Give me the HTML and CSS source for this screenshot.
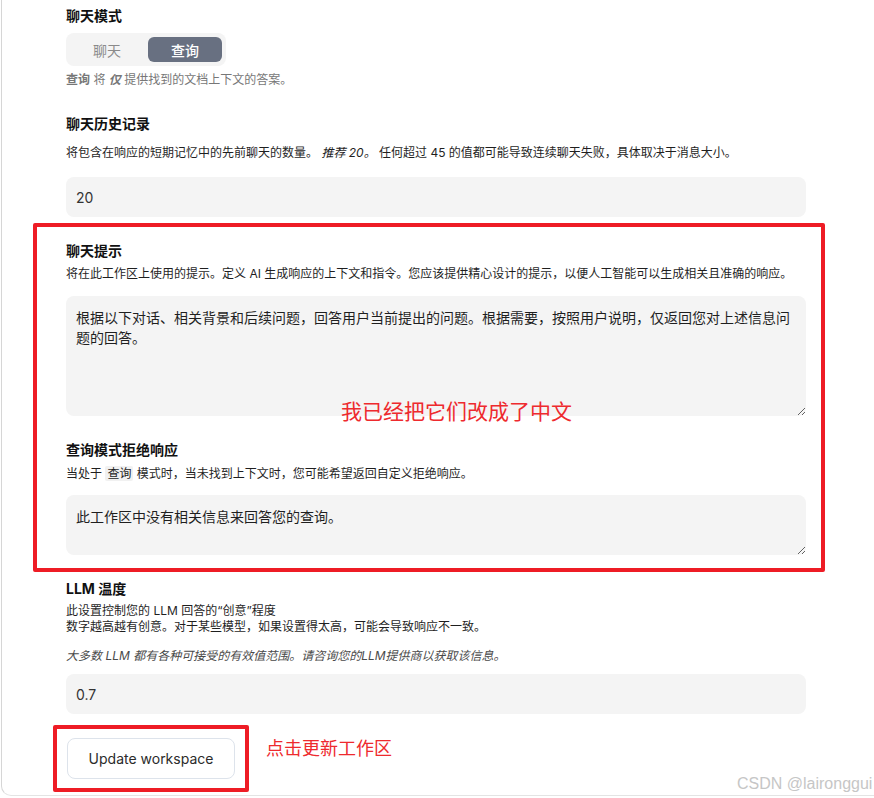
FILE: index.html
```html
<!DOCTYPE html>
<html lang="zh-CN">
<head>
<meta charset="utf-8">
<title>Workspace settings</title>
<link rel="stylesheet" href="styles.css">
</head>
<body>
<div class="panel">
 <div class="content">
  <section class="field">
    <h3 class="label">聊天模式</h3>
    <div class="toggle">
      <button class="seg">聊天</button>
      <button class="seg active">查询</button>
    </div>
    <p class="hint muted hint-mode"><b>查询</b> 将 <b><i>仅</i></b> 提供找到的文档上下文的答案。</p>
  </section>

  <section class="field f-history">
    <h3 class="label">聊天历史记录</h3>
    <p class="hint hint-history">将包含在响应的短期记忆中的先前聊天的数量。 <i>推荐 20。</i> 任何超过 45 的值都可能导致连续聊天失败，具体取决于消息大小。</p>
    <div class="input input-history">20</div>
  </section>

  <div class="mark-box">
    <section class="field">
      <h3 class="label">聊天提示</h3>
      <p class="hint hint-tight">将在此工作区上使用的提示。定义 AI 生成响应的上下文和指令。您应该提供精心设计的提示，以便人工智能可以生成相关且准确的响应。</p>
      <textarea class="area area-prompt" readonly>根据以下对话、相关背景和后续问题，回答用户当前提出的问题。根据需要，按照用户说明，仅返回您对上述信息问题的回答。</textarea>
    </section>
    <section class="field f-refusal">
      <h3 class="label">查询模式拒绝响应</h3>
      <p class="hint hint-tight2">当处于 <code class="code">查询</code> 模式时，当未找到上下文时，您可能希望返回自定义拒绝响应。</p>
      <textarea class="area area-refusal" readonly>此工作区中没有相关信息来回答您的查询。</textarea>
    </section>
    <span class="mark-note">我已经把它们改成了中文</span>
  </div>

  <section class="field f-temp">
    <h3 class="label">LLM 温度</h3>
    <p class="hint hint-temp">此设置控制您的 LLM 回答的“创意”程度<br>数字越高越有创意。对于某些模型，如果设置得太高，可能会导致响应不一致。</p>
    <p class="hint note"><i>大多数 LLM 都有各种可接受的有效值范围。请咨询您的LLM提供商以获取该信息。</i></p>
    <div class="input input-temp">0.7</div>
  </section>

  <div class="actions">
    <div class="mark-btn"><button class="btn">Update workspace</button></div>
    <span class="mark-text">点击更新工作区</span>
  </div>
 </div>
</div>
<div class="watermark">CSDN @laironggui</div>
</body>
</html>
```

FILE: styles.css
```css
html, body {
  margin: 0;
  padding: 0;
  background: #ffffff;
}

body {
  position: relative;
  width: 874px;
  height: 798px;
  overflow: hidden;
  font-family: "Inter", "Noto Sans CJK SC", sans-serif;
  color: #222;
}

.panel {
  box-sizing: border-box;
  height: 796px;
  margin-left: 1px;
  border-left: 1px solid #d6d6d6;
  border-bottom: 1px solid #e4e4e4;
  border-bottom-left-radius: 10px;
  padding: 6px 0 0 64px;
}

.content {
  width: 740px;
}

.field {
  width: 740px;
}

.label {
  margin: 0;
  font-size: 14px;
  line-height: 20px;
  font-weight: 700;
  color: #111;
}

.hint {
  margin: 0;
  font-size: 12px;
  line-height: 16px;
  color: #1f1f1f;
}

.hint.muted {
  color: #777;
}

.hint b {
  font-weight: 700;
}

.hint-mode { margin-top: 6px; }
.hint-history { margin-top: 11px; }
.hint-tight { margin-top: 5px; }
.hint-tight2 { margin-top: 6px; }
.hint-temp { margin-top: 4px; }
.hint.note { margin-top: 13px; color: #4a4a4a; }

.toggle {
  display: flex;
  gap: 4px;
  width: fit-content;
  margin-top: 7px;
  padding: 4px;
  background: #f4f4f4;
  border-radius: 8px;
}

.seg {
  width: 74px;
  height: 25px;
  border: none;
  border-radius: 6px;
  background: transparent;
  font-family: "Inter", "Noto Sans CJK SC", sans-serif;
  font-size: 14px;
  color: #8a8a8a;
  padding: 0;
}

.seg.active {
  background: #687081;
  color: #fff;
  font-weight: 500;
}

.f-history { margin-top: 26px; }

.input {
  box-sizing: border-box;
  display: flex;
  align-items: center;
  width: 740px;
  height: 40px;
  padding: 0 10px;
  background: #f4f4f4;
  border-radius: 8px;
  font-size: 14px;
  color: #333;
}

.input-history { margin-top: 16px; }

.mark-box {
  position: relative;
  margin: 6px -19px 0 -33px;
  padding: 14px 15px 13px 29px;
  border: 4px solid #ee1c25;
  border-radius: 2px;
}

.area {
  display: block;
  box-sizing: border-box;
  width: 740px;
  margin: 0;
  padding: 12px 8px 0 10px;
  border: none;
  border-radius: 8px;
  background: #f4f4f4;
  font-family: "Inter", "Noto Sans CJK SC", sans-serif;
  font-size: 14px;
  line-height: 20px;
  color: #1f1f1f;
  resize: vertical;
  outline: none;
}

.area-prompt { height: 120px; margin-top: 14px; }
.area-refusal { height: 60px; margin-top: 13px; }

.f-refusal { margin-top: 24px; }

.code {
  font-family: "Inter", "Noto Sans CJK SC", sans-serif;
  font-size: 12px;
  background: #f1f1f1;
  border-radius: 2px;
  padding: 0 2px;
}

.mark-note {
  position: absolute;
  left: 304px;
  top: 174px;
  font-size: 21px;
  line-height: 21px;
  color: #ee2a2e;
  white-space: nowrap;
}

.f-temp { margin-top: 7px; }

.input-temp { margin-top: 10px; }

.actions {
  display: flex;
  align-items: flex-start;
  margin-top: 11px;
}

.mark-btn {
  margin-left: -13px;
  padding: 9px 10px;
  border: 4px solid #ee1c25;
  border-radius: 2px;
}

.btn {
  display: block;
  box-sizing: border-box;
  width: 168px;
  height: 41px;
  border: 1px solid #dde3eb;
  border-radius: 8px;
  background: #fff;
  font-family: "Inter", "Noto Sans CJK SC", sans-serif;
  font-size: 14px;
  color: #2b2b2b;
  padding: 0;
}

.mark-text {
  margin: 12px 0 0 17px;
  font-size: 18px;
  line-height: 24px;
  color: #ee2a2e;
}

.watermark {
  position: absolute;
  left: 737px;
  top: 774px;
  font-family: "Liberation Sans", sans-serif;
  font-size: 16px;
  line-height: 20px;
  color: #c6c6c6;
  white-space: nowrap;
}
```
